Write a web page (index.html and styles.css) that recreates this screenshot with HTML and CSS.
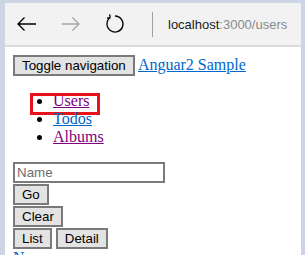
FILE: index.html
```html
<!DOCTYPE html>
<html>
<head>
<meta charset="utf-8">
<link rel="stylesheet" href="styles.css">
</head>
<body>
<div class="frame">
  <div class="window">
    <div class="toolbar">
      <span class="tb-btn">
        <svg width="20" height="20" viewBox="0 0 20 20"><path d="M1 10H19M7.5 3.5L1 10L7.5 16.5" fill="none" stroke="#000" stroke-width="1.3"/></svg>
      </span>
      <span class="tb-btn">
        <svg width="20" height="20" viewBox="0 0 20 20"><path d="M1 10H18M11.5 3.5L18 10L11.5 16.5" fill="none" stroke="#a6a6a6" stroke-width="1.3"/></svg>
      </span>
      <span class="tb-btn">
        <svg width="20" height="20" viewBox="0 0 20 20"><path d="M5.2 3.6A8 8 0 1 0 10 2" fill="none" stroke="#000" stroke-width="1.3"/><path d="M5.2 3.6L4.6 0.4M5.2 3.6L2 4.2" fill="none" stroke="#000" stroke-width="1.3"/></svg>
      </span>
      <span class="tb-sep"></span>
      <span class="url"><span class="host">localhost</span><span class="path">:3000/users</span></span>
    </div>
    <div class="page">
      <div class="header">
        <button class="btn">Toggle navigation</button>
        <a href="#" class="link">Anguar2 Sample</a>
      </div>
      <ul class="nav">
        <li class="nav-item"><a href="#" class="visited">Users</a><span class="highlight"></span></li>
        <li class="nav-item"><a href="#" class="link">Todos</a></li>
        <li class="nav-item"><a href="#" class="visited">Albums</a></li>
      </ul>
      <div class="form">
        <input class="field" type="text" placeholder="Name">
        <button class="btn">Go</button>
        <button class="btn">Clear</button>
        <div class="row">
          <button class="btn">List</button>
          <button class="btn">Detail</button>
        </div>
        <a href="#" class="link">New</a>
      </div>
    </div>
  </div>
</div>
</body>
</html>
```
FILE: styles.css
```css
html, body {
  margin: 0;
  padding: 0;
}
body {
  background: #cbd5e6;
  width: 305px;
  height: 255px;
  overflow: hidden;
}
.frame {
  padding: 3px 4px 0 5px;
  height: 252px;
}
.window {
  background: #fff;
  height: 100%;
  overflow: hidden;
}
.toolbar {
  height: 42px;
  background: #f2f2f2;
  border-bottom: 2px solid #dcdcdc;
  display: flex;
  align-items: center;
}
.tb-btn {
  width: 44px;
  height: 42px;
  display: flex;
  align-items: center;
  justify-content: center;
}
.tb-btn svg {
  display: block;
}
.tb-sep {
  width: 1px;
  height: 25px;
  background: #a0a0a0;
  margin-left: 15px;
  margin-right: 15px;
}
.url {
  font-family: "Liberation Sans", Arial, sans-serif;
  font-size: 13px;
  padding-top: 1px;
}
.host {
  color: #1a1a1a;
}
.path {
  color: #8a8a8a;
}
.page {
  padding: 8px;
  font-family: "Liberation Serif", "Times New Roman", serif;
  font-size: 16px;
  color: #000;
}
.btn {
  font-family: "Liberation Sans", Arial, sans-serif;
  font-size: 13.333px;
  color: #000;
  background: #e3e3e3;
  border: 2px solid #7a7a7a;
  padding: 1px 7px;
  margin: 0;
  height: 21px;
  line-height: 15px;
}
.link {
  color: #0066cc;
}
.visited {
  color: #800080;
}
.nav {
  margin: 16px 0;
  padding-left: 40px;
}
.nav-item {
  position: relative;
}
.highlight {
  position: absolute;
  left: -23px;
  top: 1px;
  width: 64px;
  height: 16px;
  border: 3px solid #e8121c;
}
.form {
  display: flex;
  flex-direction: column;
  align-items: flex-start;
}
.field {
  font-family: "Liberation Sans", Arial, sans-serif;
  font-size: 13.333px;
  width: 152px;
  height: 21px;
  box-sizing: border-box;
  border: 2px solid #7a7a7a;
  padding: 1px 2px;
  margin: 0 0 1px 0;
}
.field::placeholder {
  color: #6d6d6d;
}
.form > .btn {
  margin-bottom: 1px;
}
.row {
  display: flex;
  gap: 4px;
}
```
